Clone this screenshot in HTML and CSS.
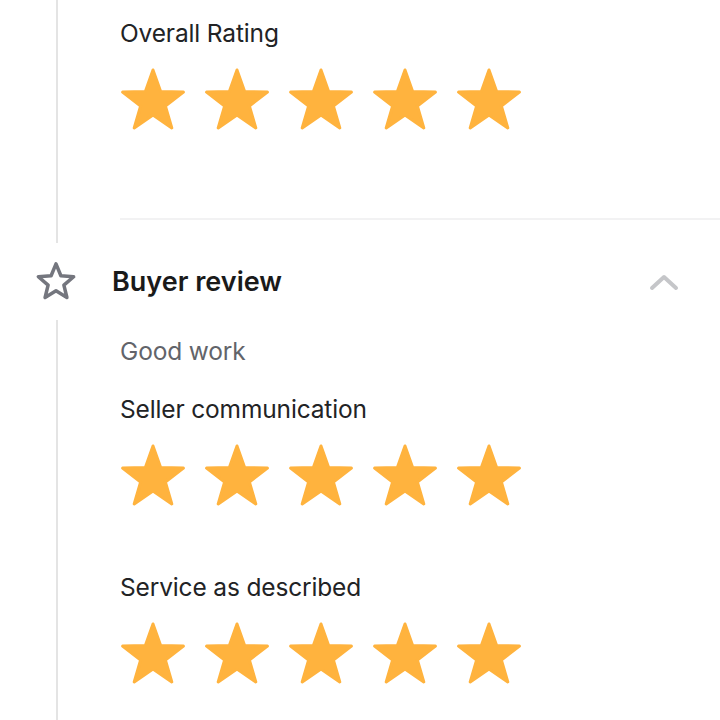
FILE: index.html
```html
<!DOCTYPE html>
<html lang="en">
<head>
<meta charset="utf-8">
<title>Review</title>
<link rel="stylesheet" href="styles.css">
</head>
<body>
<svg class="defs" width="0" height="0" aria-hidden="true">
  <symbol id="star" viewBox="-33 -34 66 62">
    <polygon points="0,-32 7.64,-10.52 30.43,-9.89 12.36,4.02 18.81,25.89 0,13 -18.81,25.89 -12.36,4.02 -30.43,-9.89 -7.64,-10.52" fill="#ffb33e" stroke="#ffb33e" stroke-width="3" stroke-linejoin="round"/>
  </symbol>
</svg>

<section class="block block-top">
  <div class="label">Overall Rating</div>
  <div class="stars">
    <svg class="star"><use href="#star"/></svg>
    <svg class="star"><use href="#star"/></svg>
    <svg class="star"><use href="#star"/></svg>
    <svg class="star"><use href="#star"/></svg>
    <svg class="star"><use href="#star"/></svg>
  </div>
  <hr class="divider">
</section>

<header class="step-head">
  <div class="step-icon">
    <svg width="42" height="41" viewBox="-21.5 -22 43 42">
      <polygon points="0,-19 5,-6.88 18.07,-5.87 8.08,2.63 11.17,15.37 0,8.5 -11.17,15.37 -8.08,2.63 -18.07,-5.87 -5,-6.88" fill="none" stroke="#74767e" stroke-width="3.6" stroke-linejoin="round"/>
    </svg>
  </div>
  <h2 class="step-title">Buyer review</h2>
  <svg class="chevron" width="32" height="18" viewBox="0 0 32 18">
    <polyline points="4,15 16,4 28,15" fill="none" stroke="#c5c6c9" stroke-width="4" stroke-linecap="round" stroke-linejoin="round"/>
  </svg>
</header>

<section class="block block-body">
  <p class="comment">Good work</p>
  <div class="label label-first">Seller communication</div>
  <div class="stars">
    <svg class="star"><use href="#star"/></svg>
    <svg class="star"><use href="#star"/></svg>
    <svg class="star"><use href="#star"/></svg>
    <svg class="star"><use href="#star"/></svg>
    <svg class="star"><use href="#star"/></svg>
  </div>
  <div class="label label-next">Service as described</div>
  <div class="stars">
    <svg class="star"><use href="#star"/></svg>
    <svg class="star"><use href="#star"/></svg>
    <svg class="star"><use href="#star"/></svg>
    <svg class="star"><use href="#star"/></svg>
    <svg class="star"><use href="#star"/></svg>
  </div>
</section>
</body>
</html>
```
FILE: styles.css
```css
html, body {
  margin: 0;
  padding: 0;
  background: #ffffff;
  font-family: Inter, "Noto Sans", "Liberation Sans", sans-serif;
  color: #222325;
  overflow: hidden;
}

.defs {
  position: absolute;
  width: 0;
  height: 0;
}

.block {
  margin-left: 56px;
  border-left: 2px solid #e4e4e4;
  padding-left: 62px;
}

.block-top {
  padding-top: 17px;
  padding-bottom: 23px;
}

.block-body {
  padding-top: 15px;
  padding-bottom: 60px;
}

.label {
  font-size: 24.5px;
  letter-spacing: -0.15px;
  line-height: 32px;
  color: #222325;
}

.comment {
  margin: 0;
  font-size: 24.5px;
  letter-spacing: -0.15px;
  line-height: 32px;
  color: #62646a;
}

.label-first {
  margin-top: 26px;
}

.label-next {
  margin-top: 65px;
}

.stars {
  display: flex;
  gap: 18px;
  margin-top: 19px;
}

.star {
  width: 66px;
  height: 62px;
  display: block;
}

.divider {
  margin: 88px 0 0 0;
  border: 0;
  height: 2px;
  background: #f2f2f3;
}

.step-head {
  display: flex;
  align-items: center;
  height: 77px;
}

.step-icon {
  width: 112px;
  display: flex;
  justify-content: center;
}

.step-icon svg {
  display: block;
}

.step-title {
  margin: 0;
  flex: 1;
  font-size: 27px;
  font-weight: 600;
  color: #1a1a1a;
  line-height: 34px;
}

.chevron {
  display: block;
  margin-right: 40px;
}
```
